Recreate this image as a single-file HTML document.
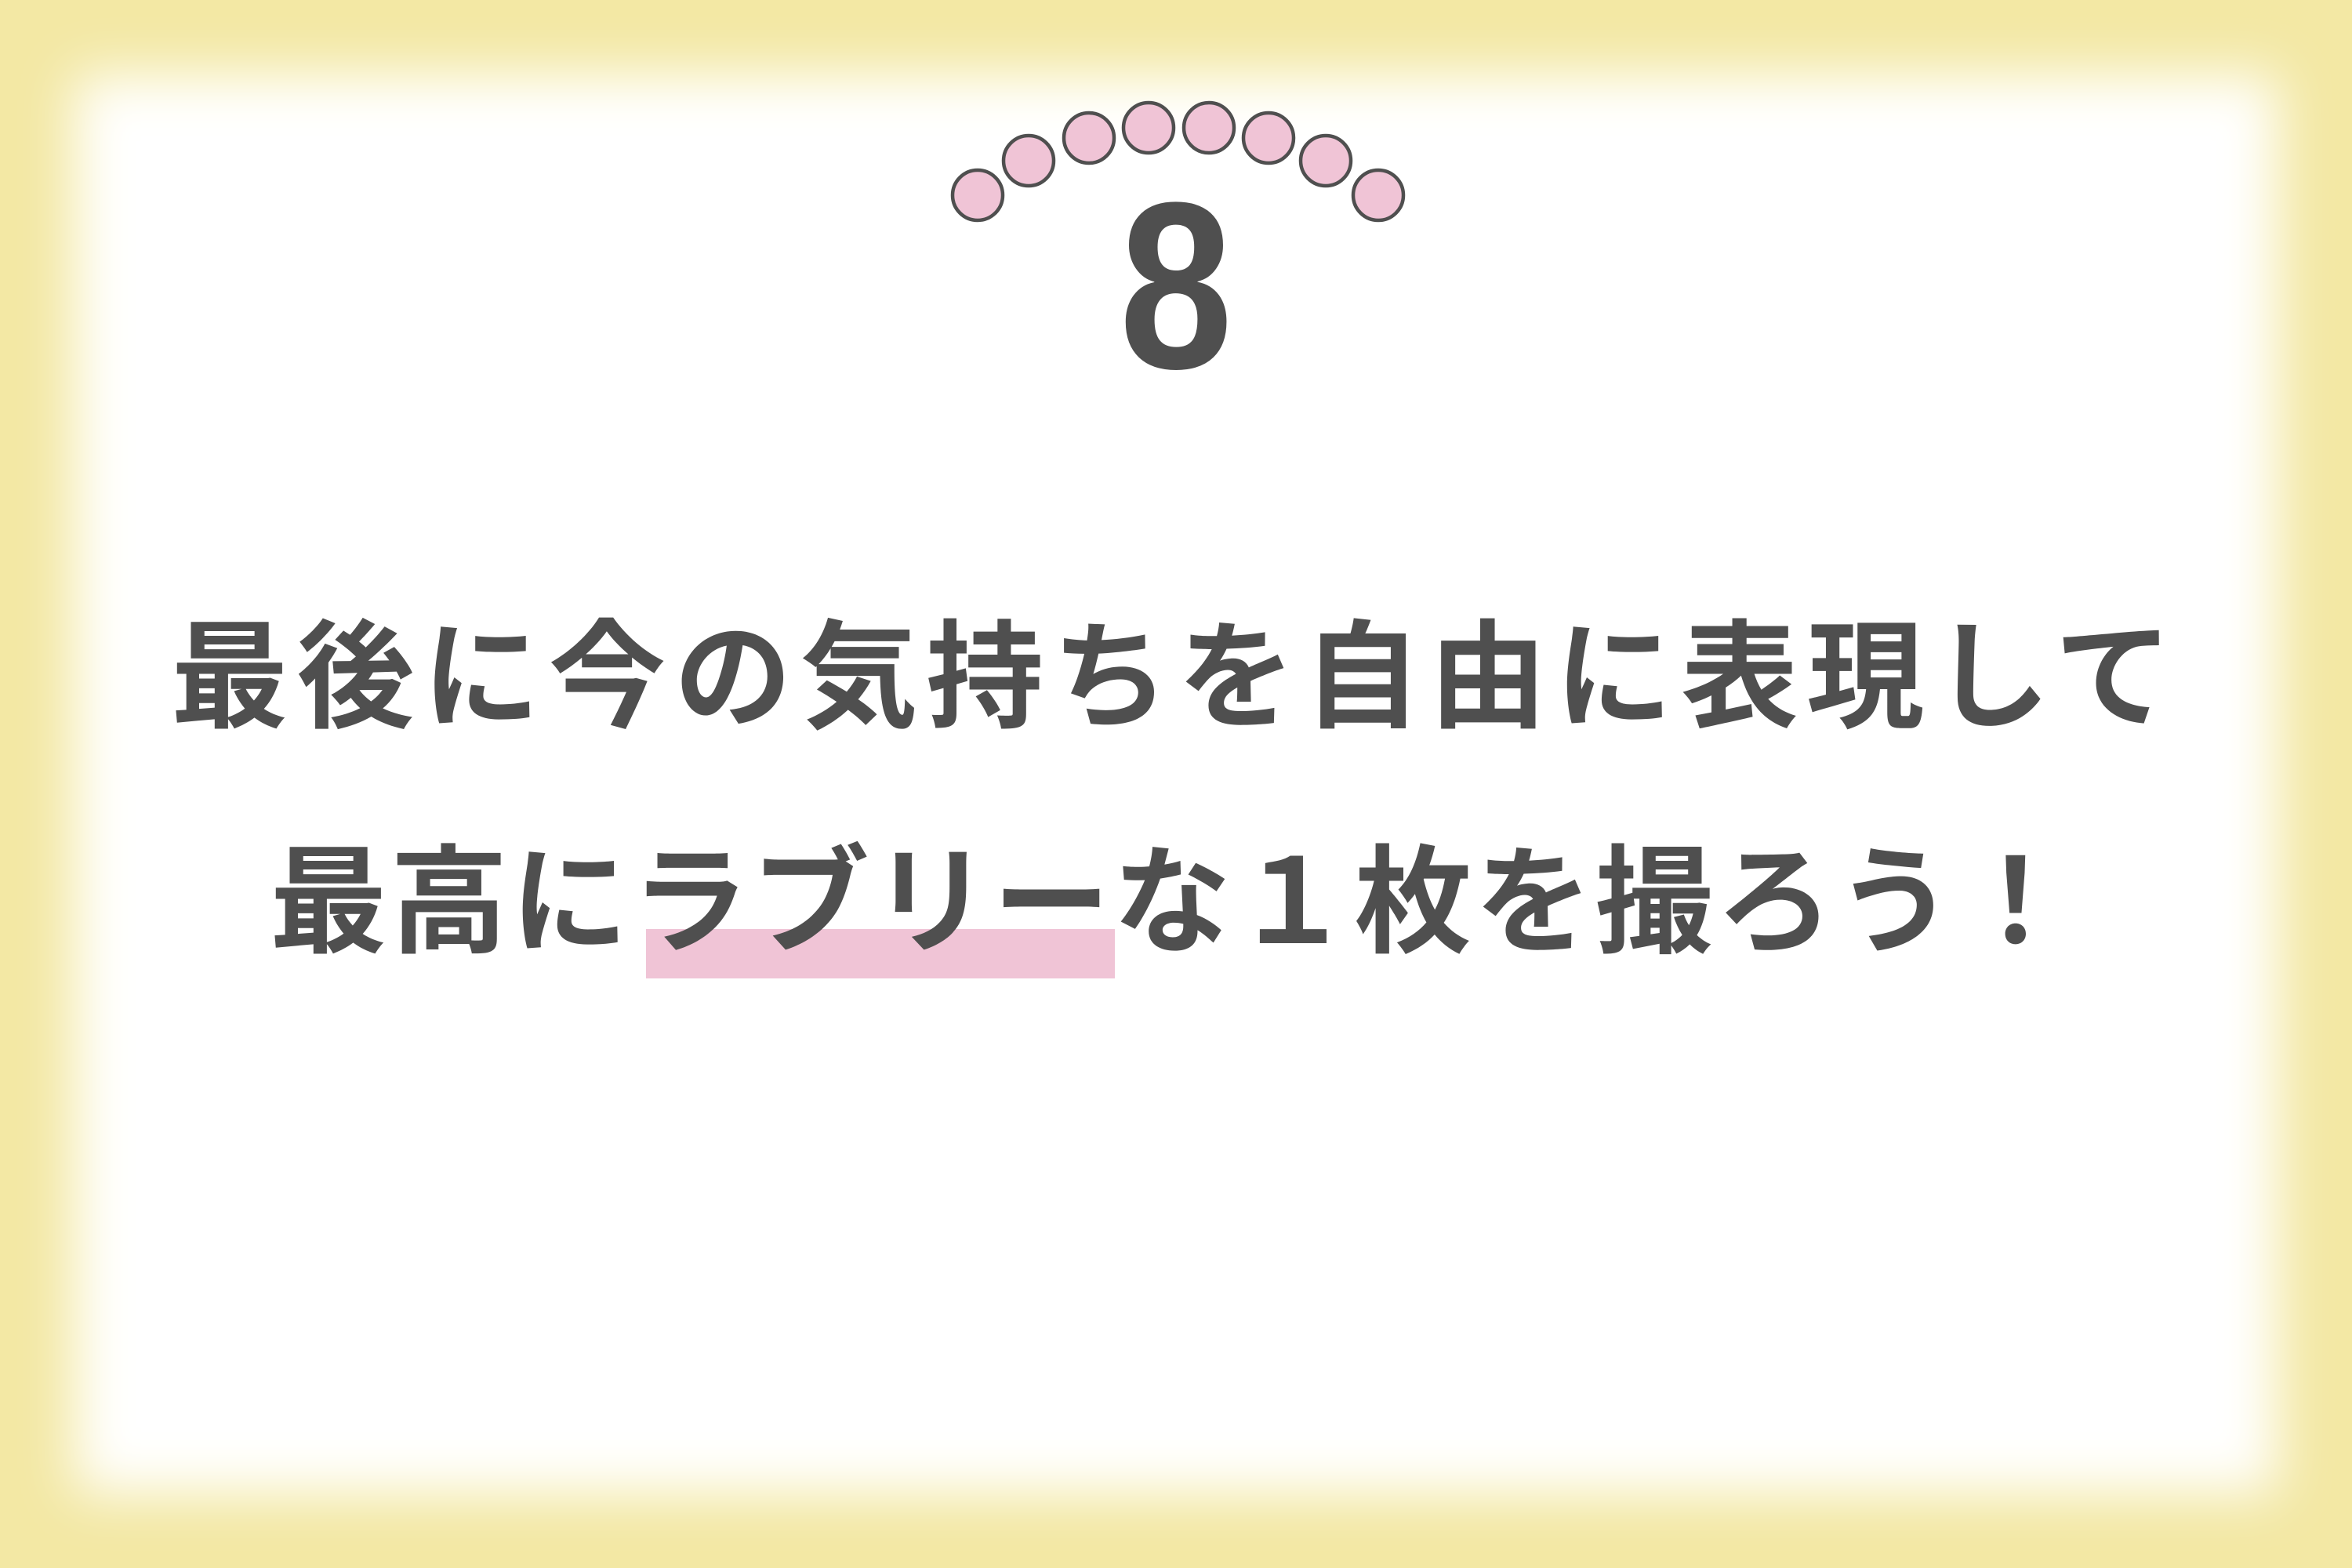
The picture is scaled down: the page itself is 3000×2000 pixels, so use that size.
<!DOCTYPE html>
<html><head><meta charset="utf-8"><style>
html,body{margin:0;padding:0;}
body{width:3000px;height:2000px;position:relative;overflow:hidden;background:#f3e8a4;}
.inner{position:absolute;left:95px;top:95px;right:95px;bottom:95px;background:#fff;filter:blur(35px);}
.line{position:absolute;white-space:nowrap;font-family:"Liberation Sans","Noto Sans CJK JP",sans-serif;font-weight:700;color:#4f4f4f;font-size:150px;line-height:150px;}
.hl{position:absolute;left:824px;top:1185px;width:598px;height:63px;background:#f0c4d6;}
.eight{position:absolute;left:1300px;width:400px;text-align:center;top:214px;font-family:"Liberation Sans",sans-serif;font-weight:700;font-size:303px;line-height:303px;color:#4f4f4f;transform:scaleX(0.86);}
</style></head><body>
<div class="inner"></div>
<svg style="position:absolute;left:0;top:0" width="3000" height="400">
<g fill="#f0c4d6" stroke="#4f4f4f" stroke-width="4.5">
<circle cx="1247" cy="249" r="32"/>
<circle cx="1312" cy="205" r="32"/>
<circle cx="1389" cy="176" r="32"/>
<circle cx="1465" cy="163" r="32"/>
<circle cx="1542" cy="163" r="32"/>
<circle cx="1618" cy="176" r="32"/>
<circle cx="1691" cy="205" r="32"/>
<circle cx="1758" cy="249" r="32"/>
</g></svg>
<div class="eight">8</div>
<div class="hl"></div>
<div class="line" style="left:218px;top:789px;letter-spacing:10.5px;">最後に今の気持ちを自由に表現して</div>
<div class="line" style="left:344px;top:1076px;letter-spacing:3.7px;">最高にラブリーな１枚を撮ろう！</div>
</body></html>
